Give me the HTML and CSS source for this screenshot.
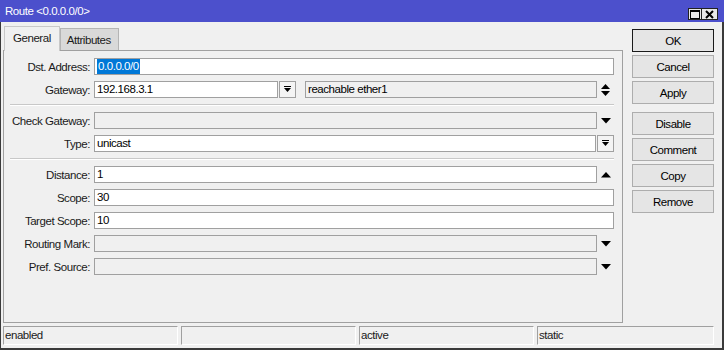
FILE: index.html
```html
<!DOCTYPE html>
<html lang="en">
<head>
  <meta charset="UTF-8">
  <title>Route &lt;0.0.0.0/0&gt;</title>
  <link rel="stylesheet" href="styles.css">
</head>
<body>
  <div class="window">
    <div class="titlebar">
      <span class="title">Route &lt;0.0.0.0/0&gt;</span>
      <div class="title-btns">
        <span class="tbtn tbtn-max">
          <svg width="10" height="9" viewBox="0 0 10 9"><rect x="0.5" y="0.5" width="9" height="8" fill="none" stroke="#000"/><rect x="0" y="0" width="10" height="2" fill="#000"/></svg>
        </span>
        <span class="tbtn tbtn-close">
          <svg width="9" height="9" viewBox="0 0 9 9"><path d="M1 1 L8 8 M8 1 L1 8" stroke="#000" stroke-width="2"/></svg>
        </span>
      </div>
    </div>

    <div class="frame">
      <div class="main">
        <div class="left">
          <div class="tabs">
            <div class="tab active">General</div>
            <div class="tab">Attributes</div>
          </div>

          <div class="panel">
            <div class="row">
              <label class="lbl">Dst. Address:</label>
              <div class="field"><span class="sel">0.0.0.0/0</span></div>
            </div>
            <div class="row">
              <label class="lbl">Gateway:</label>
              <div class="field field-gw">192.168.3.1</div>
              <span class="dropbtn">
                <svg width="7" height="7" viewBox="0 0 7 7"><rect x="0" y="0" width="7" height="1" fill="#000"/><polygon points="0,2 7,2 3.5,6" fill="#000"/></svg>
              </span>
              <div class="field ro field-reach">reachable ether1</div>
              <span class="slot">
                <svg width="9" height="12" viewBox="0 0 9 12"><polygon points="4.5,0 9,5 0,5" fill="#000"/><polygon points="0,7 9,7 4.5,12" fill="#000"/></svg>
              </span>
            </div>

            <div class="sep"></div>

            <div class="row">
              <label class="lbl">Check Gateway:</label>
              <div class="field ro"></div>
              <span class="slot">
                <svg width="10" height="6" viewBox="0 0 10 6"><polygon points="0,0 10,0 5,5.5" fill="#000"/></svg>
              </span>
            </div>
            <div class="row">
              <label class="lbl">Type:</label>
              <div class="field">unicast</div>
              <span class="dropbtn">
                <svg width="7" height="7" viewBox="0 0 7 7"><rect x="0" y="0" width="7" height="1" fill="#000"/><polygon points="0,2 7,2 3.5,6" fill="#000"/></svg>
              </span>
            </div>

            <div class="sep"></div>

            <div class="row">
              <label class="lbl">Distance:</label>
              <div class="field">1</div>
              <span class="slot">
                <svg width="10" height="6" viewBox="0 0 10 6"><polygon points="5,0 10,5.5 0,5.5" fill="#000"/></svg>
              </span>
            </div>
            <div class="row">
              <label class="lbl">Scope:</label>
              <div class="field">30</div>
            </div>
            <div class="row">
              <label class="lbl">Target Scope:</label>
              <div class="field">10</div>
            </div>
            <div class="row">
              <label class="lbl">Routing Mark:</label>
              <div class="field ro"></div>
              <span class="slot">
                <svg width="10" height="6" viewBox="0 0 10 6"><polygon points="0,0 10,0 5,5.5" fill="#000"/></svg>
              </span>
            </div>
            <div class="row">
              <label class="lbl">Pref. Source:</label>
              <div class="field ro"></div>
              <span class="slot">
                <svg width="10" height="6" viewBox="0 0 10 6"><polygon points="0,0 10,0 5,5.5" fill="#000"/></svg>
              </span>
            </div>
          </div>
        </div>

        <div class="actions">
          <button class="btn btn-default">OK</button>
          <button class="btn">Cancel</button>
          <button class="btn">Apply</button>
          <button class="btn btn-gap">Disable</button>
          <button class="btn">Comment</button>
          <button class="btn">Copy</button>
          <button class="btn">Remove</button>
        </div>
      </div>

      <div class="statusbar">
        <div class="status">enabled</div>
        <div class="status"></div>
        <div class="status">active</div>
        <div class="status">static</div>
      </div>
    </div>
  </div>
</body>
</html>
```

FILE: styles.css
```css
* {
  box-sizing: border-box;
}

body {
  margin: 0;
  font-family: "Liberation Sans", Arial, sans-serif;
  font-size: 11.5px;
  letter-spacing: -0.45px;
  color: #1a1a1a;
  background: #f0f0f0;
}

.window {
  width: 724px;
  height: 350px;
  display: flex;
  flex-direction: column;
  background: #f0f0f0;
}

.titlebar {
  height: 22px;
  flex: 0 0 22px;
  background: #4c50cc;
  color: #fff;
  display: flex;
  align-items: center;
  justify-content: space-between;
  padding: 0 6px 0 5px;
}

.title-btns {
  display: flex;
  align-self: flex-end;
  margin-bottom: 2px;
}

.tbtn {
  height: 12px;
  background: #e8e8e8;
  border: 1px solid #222;
  display: flex;
  align-items: center;
  justify-content: center;
}

.tbtn-max {
  width: 14px;
}

.tbtn-close {
  width: 16px;
  border-left: none;
}

.frame {
  flex: 1;
  display: flex;
  flex-direction: column;
  border-left: 1px solid #3a3a3a;
  border-right: 2px solid #3a3a3a;
  border-bottom: 2px solid #3a3a3a;
  padding: 3px 8px 3px 2px;
}

.main {
  display: flex;
  gap: 9px;
}

.left {
  width: 620px;
}

.tabs {
  display: flex;
  align-items: flex-end;
  padding-left: 1px;
  height: 25px;
}

.tab {
  height: 22px;
  padding: 0 7px 0 6px;
  display: flex;
  align-items: center;
  background: #d9d9d9;
  border: 1px solid #b4b4b4;
  border-bottom: none;
}

.tab.active {
  height: 25px;
  padding: 0 8px 2px 8px;
  background: #f0f0f0;
  border-color: #c8c8c8;
  margin-bottom: -1px;
  position: relative;
  z-index: 1;
}

.panel {
  height: 273px;
  border: 1px solid #a0a0a0;
  padding: 7px 8px 0 0;
  display: flex;
  flex-direction: column;
  gap: 6px;
}

.row {
  display: flex;
  align-items: center;
  height: 17px;
}

.lbl {
  width: 86px;
  margin-right: 4px;
  text-align: right;
  white-space: nowrap;
}

.field {
  flex: 1;
  height: 17px;
  border: 1px solid #a0a0a0;
  background: #fff;
  padding: 0 2px;
  line-height: 15px;
  color: #000;
  white-space: nowrap;
  overflow: hidden;
}

.field.ro {
  background: #f0f0f0;
}

.field-gw {
  flex: 0 0 184px;
}

.field-reach {
  margin-left: 9px;
}

.sel {
  display: inline-block;
  background: #0078d7;
  color: #fff;
  padding: 0 1px;
  line-height: 15px;
}

.slot {
  width: 17px;
  flex: 0 0 17px;
  display: flex;
  align-items: center;
  justify-content: center;
}

.dropbtn {
  width: 17px;
  height: 17px;
  flex: 0 0 17px;
  margin-left: 1px;
  border: 1px solid #a0a0a0;
  background: #f4f4f4;
  display: flex;
  align-items: center;
  justify-content: center;
}

.sep {
  height: 2px;
  margin-left: 6px;
  border-top: 1px solid #c8c8c8;
  border-bottom: 1px solid #fff;
}

.actions {
  width: 82px;
  padding-top: 4px;
  display: flex;
  flex-direction: column;
  gap: 3px;
}

.btn {
  height: 23px;
  font-family: inherit;
  font-size: 11.5px;
  letter-spacing: -0.45px;
  color: #000;
  background: #e5e5e5;
  border: 1px solid #adadad;
  padding: 0;
}

.btn-default {
  border-color: #1a1a1a;
}

.btn-gap {
  margin-top: 5px;
}

.statusbar {
  display: flex;
  gap: 3px;
  margin-top: 3px;
  height: 19px;
}

.status {
  flex: 0 0 175px;
  border-top: 1px solid #a0a0a0;
  border-left: 1px solid #a0a0a0;
  border-bottom: 1px solid #fff;
  border-right: 1px solid #fff;
  padding-left: 1px;
  line-height: 17px;
}

.status:last-child {
  flex: 1;
}
```
